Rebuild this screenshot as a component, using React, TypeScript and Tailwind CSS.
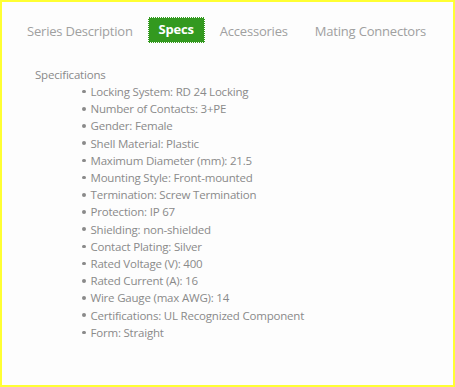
import { useState } from "react";

const specs = [
    "Locking System: RD 24 Locking",
    "Number of Contacts: 3+PE",
    "Gender: Female",
    "Shell Material: Plastic",
    "Maximum Diameter (mm): 21.5",
    "Mounting Style: Front-mounted",
    "Termination: Screw Termination",
    "Protection: IP 67",
    "Shielding: non-shielded",
    "Contact Plating: Silver",
    "Rated Voltage (V): 400",
    "Rated Current (A): 16",
    "Wire Gauge (max AWG): 14",
    "Certifications: UL Recognized Component",
    "Form: Straight",
];

const tabs = [
    { name: "Series Description", gap: "mr-[15px]" },
    { name: "Specs", gap: "mr-[15px]" },
    { name: "Accessories", gap: "mr-[27px]" },
    { name: "Mating Connectors", gap: "" },
];

export default function App() {
    const [active, setActive] = useState("Specs");

    return (
        <div className="w-[455px] h-[387px] border-2 border-[#ffff33] bg-[#fdfdfd] font-['Open_Sans',sans-serif] text-[#8a8a8a]">
            {/* Tabs */}
            <div className="flex items-center pl-[25px] pt-[15px]">
                {tabs.map((tab) => (
                    <button
                        key={tab.name}
                        onClick={() => setActive(tab.name)}
                        className={
                            tab.name === active
                                ? `${tab.gap} h-[26px] w-[57px] bg-[#33991f] text-white font-bold text-[13px] tracking-[-0.2px]`
                                : `${tab.gap} h-[26px] text-[13px] tracking-[-0.2px] text-[#a0a0a0] pt-[3px]`
                        }
                    >
                        <span
                            className={
                                tab.name === active
                                    ? "flex h-full items-center justify-center border border-dotted border-white"
                                    : "flex h-full items-center"
                            }
                        >
                            {tab.name}
                        </span>
                    </button>
                ))}
            </div>

            {/* Specs */}
            <div className="pl-[33px] pt-[23px] text-[11.5px] tracking-[-0.2px]">
                <div className="leading-[17px]">Specifications</div>
                <ul className="pl-[46px] leading-[17.2px]">
                    {specs.map((s) => (
                        <li key={s} className="flex items-center">
                            <span className="mr-[5px] ml-[1px] size-[3.5px] rounded-full bg-[#8a8a8a]"></span>
                            {s}
                        </li>
                    ))}
                </ul>
            </div>
        </div>
    );
}
